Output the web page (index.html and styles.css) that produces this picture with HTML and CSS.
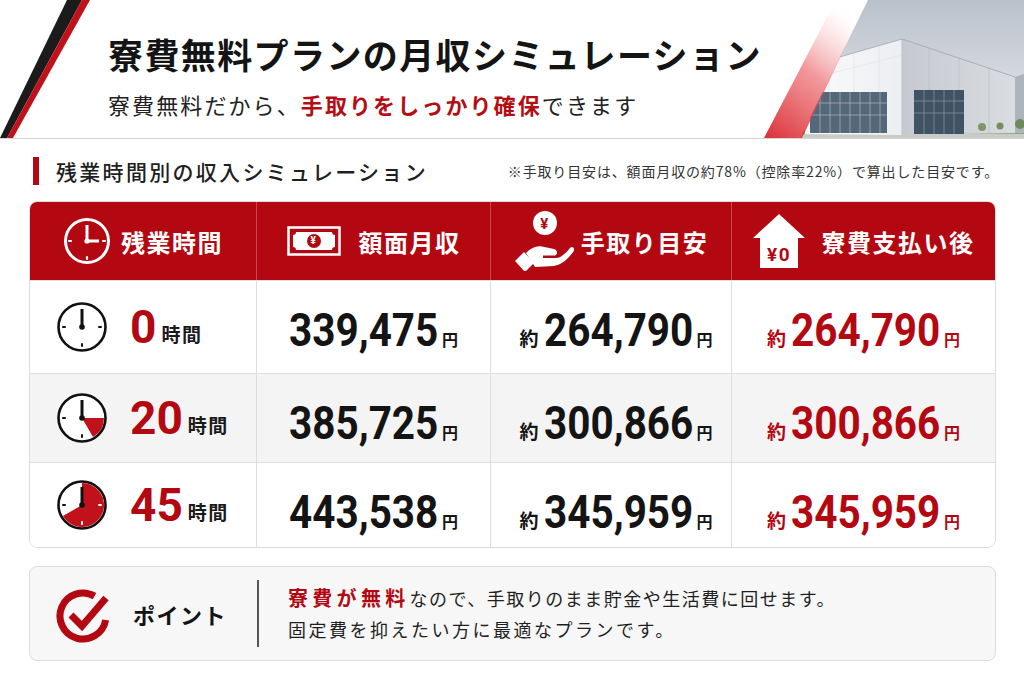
FILE: index.html
```html
<!DOCTYPE html>
<html lang="ja">
<head>
<meta charset="utf-8">
<title>寮費無料プランの月収シミュレーション</title>
<link rel="stylesheet" href="styles.css">
</head>
<body>
<header class="hero">
  <svg class="stripes" width="95" height="138" viewBox="0 0 95 138" aria-hidden="true">
    <polygon points="67,0 82,0 7,138 0,138" fill="#1b1b1b"/>
    <polygon points="82,0 90,0 13,138 7,138" fill="#c1121b"/>
  </svg>
  <div class="hero-text">
    <h1 class="title">寮費無料プランの月収シミュレーション</h1>
    <p class="sub">寮費無料だから、<strong>手取りをしっかり確保</strong>できます</p>
  </div>
  <svg class="photo" width="260" height="138" viewBox="0 0 260 138" aria-hidden="true">
    <defs>
      <linearGradient id="sky" x1="0" y1="0" x2="0" y2="1">
        <stop offset="0" stop-color="#b9c1cb"/>
        <stop offset="0.6" stop-color="#d6dae0"/>
        <stop offset="1" stop-color="#e6e8ec"/>
      </linearGradient>
      <linearGradient id="redband" x1="0" y1="1" x2="0.6" y2="0">
        <stop offset="0" stop-color="#d8242b" stop-opacity="0.95"/>
        <stop offset="0.55" stop-color="#e8555a" stop-opacity="0.6"/>
        <stop offset="1" stop-color="#f4b0b2" stop-opacity="0"/>
      </linearGradient>
      <linearGradient id="leftface" x1="0" y1="0" x2="1" y2="0">
        <stop offset="0" stop-color="#fbfbfc"/>
        <stop offset="1" stop-color="#eceef1"/>
      </linearGradient>
      <linearGradient id="rightface" x1="0" y1="0" x2="1" y2="0">
        <stop offset="0" stop-color="#c6cad0"/>
        <stop offset="1" stop-color="#d9dce0"/>
      </linearGradient>
      <clipPath id="photoclip">
        <polygon points="104,0 260,0 260,138 36,138"/>
      </clipPath>
    </defs>
    <g clip-path="url(#photoclip)">
      <rect x="0" y="0" width="260" height="138" fill="url(#sky)"/>
      <rect x="0" y="128" width="260" height="10" fill="#c9ccc6"/>
      <rect x="0" y="131" width="260" height="3" fill="#8fa37a"/>
      <polygon points="251,77 260,74 260,133 251,133" fill="#aeb4bb"/>
      <polygon points="41,67 138,39 138,135 41,134" fill="url(#leftface)"/>
      <polygon points="138,39 251,77 251,133 138,135" fill="url(#rightface)"/>
      <polyline points="41,67 138,39 251,77" fill="none" stroke="#9ea5ae" stroke-width="0.8"/>
      <line x1="138" y1="39" x2="138" y2="135" stroke="#b3b8bf" stroke-width="0.8"/>
      <g stroke="#dde0e4" stroke-width="0.6">
        <line x1="65" y1="60" x2="65" y2="92"/>
        <line x1="90" y1="53" x2="90" y2="92"/>
        <line x1="115" y1="46" x2="115" y2="92"/>
        <line x1="41" y1="80" x2="138" y2="55"/>
      </g>
      <g stroke="#b8bdc3" stroke-width="0.6">
        <line x1="165" y1="48" x2="165" y2="90"/>
        <line x1="195" y1="58" x2="195" y2="90"/>
        <line x1="225" y1="68" x2="225" y2="133"/>
      </g>
      <rect x="46" y="92" width="77" height="41" fill="#55687a"/>
      <g stroke="#a9b6c2" stroke-width="0.7">
        <line x1="46" y1="103" x2="123" y2="103"/>
        <line x1="46" y1="115" x2="123" y2="115"/>
        <line x1="56" y1="92" x2="56" y2="133"/>
        <line x1="66" y1="92" x2="66" y2="133"/>
        <line x1="76" y1="92" x2="76" y2="133"/>
        <line x1="86" y1="92" x2="86" y2="133"/>
        <line x1="96" y1="92" x2="96" y2="133"/>
        <line x1="106" y1="92" x2="106" y2="133"/>
        <line x1="116" y1="92" x2="116" y2="133"/>
      </g>
      <rect x="150" y="90" width="50" height="44" fill="#3f5364"/>
      <g stroke="#8a9aa8" stroke-width="0.7">
        <line x1="150" y1="101" x2="200" y2="101"/>
        <line x1="150" y1="113" x2="200" y2="113"/>
        <line x1="160" y1="90" x2="160" y2="134"/>
        <line x1="170" y1="90" x2="170" y2="134"/>
        <line x1="180" y1="90" x2="180" y2="134"/>
        <line x1="190" y1="90" x2="190" y2="134"/>
      </g>
      <circle cx="218" cy="127" r="4" fill="#7f9669"/>
      <circle cx="236" cy="126" r="3.5" fill="#758d60"/>
      <circle cx="256" cy="124" r="5" fill="#6f8a5a"/>
    </g>
    <polygon points="0,138 38,138 104,0 72,0" fill="url(#redband)"/>
  </svg>
</header>

<main class="main">
  <div class="sec-head">
    <div class="sec-title"><span class="bar"></span><h2>残業時間別の収入シミュレーション</h2></div>
    <p class="note">※手取り目安は、額面月収の約78%（控除率22%）で算出した目安です。</p>
  </div>

  <div class="table">
    <div class="th">
      <svg class="ic-h1" width="48" height="48" viewBox="0 0 48 48" aria-hidden="true">
        <circle cx="24" cy="24" r="21.5" fill="none" stroke="#fff" stroke-width="3"/>
        <g stroke="#fff" stroke-width="2.2" stroke-linecap="round">
          <line x1="24" y1="40" x2="24" y2="42"/>
          <line x1="6" y1="24" x2="8" y2="24"/>
          <line x1="40" y1="24" x2="42" y2="24"/>
        </g>
        <polyline points="24,8 24,24 36,24" fill="none" stroke="#fff" stroke-width="3"/>
        <circle cx="24" cy="24" r="2.6" fill="#fff"/>
      </svg>
      <span>残業時間</span>
    </div>
    <div class="th">
      <svg class="ic-h2" width="54" height="30" viewBox="0 0 54 30" aria-hidden="true">
        <rect x="1.5" y="1.5" width="51" height="27" fill="none" stroke="#fff" stroke-width="2.5"/>
        <path d="M9,6 H45 A3,3 0 0 0 48,9 V21 A3,3 0 0 0 45,24 H9 A3,3 0 0 0 6,21 V9 A3,3 0 0 0 9,6 Z" fill="#fff"/>
        <circle cx="27" cy="15" r="7" fill="#b30812"/>
        <text x="27" y="18.4" text-anchor="middle" class="svg-yen-s">¥</text>
      </svg>
      <span>額面月収</span>
    </div>
    <div class="th">
      <svg class="ic-h3" width="60" height="60" viewBox="0 0 60 60" aria-hidden="true">
        <circle cx="31" cy="12" r="12" fill="#fff"/>
        <text x="31" y="17.5" text-anchor="middle" class="svg-yen-m">¥</text>
        <path d="M12,42 C17,36.5 23,34.5 28,35.5 L40,38 C44,39 44,44.5 40,44.5 L29,44.5 L29,47 L42,47 C47,47 52,42 56,37 C58.5,34.5 61.5,37.5 59.5,40.5 C54,48 48,53.5 40,55 L21,56 Z" fill="#fff"/>
        <path d="M1,50 L10,41 L20,52 L11,61 Z" fill="#fff"/>
      </svg>
      <span>手取り目安</span>
    </div>
    <div class="th">
      <svg class="ic-h4" width="52" height="54" viewBox="0 0 52 54" aria-hidden="true">
        <polygon points="26,0 52,24 45,24 45,54 7,54 7,24 0,24" fill="#fff"/>
        <text x="26" y="47" text-anchor="middle" class="svg-zero">¥0</text>
      </svg>
      <span>寮費支払い後</span>
    </div>

    <!-- row 1 -->
    <div class="td hours">
      <svg width="52" height="52" viewBox="0 0 52 52" aria-hidden="true">
        <circle cx="26" cy="26" r="23.5" fill="#fff" stroke="#111" stroke-width="2.6"/>
        <g stroke="#111" stroke-width="2" stroke-linecap="round">
          <line x1="26" y1="43" x2="26" y2="45"/>
          <line x1="7" y1="26" x2="9" y2="26"/>
          <line x1="43" y1="26" x2="45" y2="26"/>
        </g>
        <line x1="26" y1="26" x2="26" y2="8" stroke="#111" stroke-width="3"/>
        <circle cx="26" cy="26" r="2.8" fill="#111"/>
      </svg>
      <span class="h-num">0</span><span class="h-unit">時間</span>
    </div>
    <div class="td val sep"><span class="num">339,475</span><span class="yen">円</span></div>
    <div class="td val sep shift"><span class="approx">約</span><span class="num">264,790</span><span class="yen">円</span></div>
    <div class="td val sep red"><span class="approx">約</span><span class="num">264,790</span><span class="yen">円</span></div>

    <!-- row 2 -->
    <div class="td hours alt">
      <svg width="52" height="52" viewBox="0 0 52 52" aria-hidden="true">
        <circle cx="26" cy="26" r="23.5" fill="#fff" stroke="#111" stroke-width="2.6"/>
        <path d="M26,26 L48,26 A22,22 0 0 1 37,45.05 Z" fill="#c1121b"/>
        <g stroke="#111" stroke-width="2" stroke-linecap="round">
          <line x1="26" y1="43" x2="26" y2="45"/>
          <line x1="7" y1="26" x2="9" y2="26"/>
        </g>
        <line x1="26" y1="26" x2="26" y2="8" stroke="#111" stroke-width="3"/>
        <circle cx="26" cy="26" r="2.8" fill="#111"/>
      </svg>
      <span class="h-num">20</span><span class="h-unit">時間</span>
    </div>
    <div class="td val sep alt"><span class="num">385,725</span><span class="yen">円</span></div>
    <div class="td val sep alt shift"><span class="approx">約</span><span class="num">300,866</span><span class="yen">円</span></div>
    <div class="td val sep alt red"><span class="approx">約</span><span class="num">300,866</span><span class="yen">円</span></div>

    <!-- row 3 -->
    <div class="td hours">
      <svg width="52" height="52" viewBox="0 0 52 52" aria-hidden="true">
        <circle cx="26" cy="26" r="23.5" fill="#fff" stroke="#111" stroke-width="2.6"/>
        <path d="M26,26 L26,4 A22,22 0 1 1 6.95,37 Z" fill="#c1121b"/>
        <g stroke="#fff" stroke-width="2" stroke-linecap="round">
          <line x1="26" y1="43" x2="26" y2="45"/>
          <line x1="43" y1="26" x2="45" y2="26"/>
        </g>
        <line x1="7" y1="26" x2="9" y2="26" stroke="#111" stroke-width="2" stroke-linecap="round"/>
        <line x1="26" y1="26" x2="26" y2="8" stroke="#111" stroke-width="3"/>
        <circle cx="26" cy="26" r="2.8" fill="#111"/>
      </svg>
      <span class="h-num">45</span><span class="h-unit">時間</span>
    </div>
    <div class="td val sep"><span class="num">443,538</span><span class="yen">円</span></div>
    <div class="td val sep shift"><span class="approx">約</span><span class="num">345,959</span><span class="yen">円</span></div>
    <div class="td val sep red"><span class="approx">約</span><span class="num">345,959</span><span class="yen">円</span></div>
  </div>

  <div class="point">
    <svg class="check" width="60" height="60" viewBox="0 0 60 60" aria-hidden="true">
      <path d="M39.5,12.1 A23,23 0 1 0 50.65,36" fill="none" stroke="#b30812" stroke-width="7"/>
      <polyline points="16,31 27,42 51,14" fill="none" stroke="#b30812" stroke-width="7" stroke-linejoin="miter"/>
    </svg>
    <span class="point-label">ポイント</span>
    <span class="divider"></span>
    <div class="point-text">
      <p><strong>寮費が無料</strong>なので、手取りのまま貯金や生活費に回せます。</p>
      <p class="wide">固定費を抑えたい方に最適なプランです。</p>
    </div>
  </div>
</main>
</body>
</html>
```

FILE: styles.css
```css
* { box-sizing: border-box; }

html, body {
  margin: 0;
  padding: 0;
  background: #ffffff;
}

body {
  width: 1024px;
  height: 683px;
  overflow: hidden;
  font-family: "Noto Sans CJK JP", "Noto Sans", sans-serif;
  color: #1a1a1a;
}

/* ---------- hero ---------- */
.hero {
  display: flex;
  height: 139px;
  border-bottom: 1px solid #d6d6d6;
  background: #fff;
}

.stripes { flex: none; display: block; }

.hero-text {
  margin-left: 13px;
  padding-top: 33px;
}

.title {
  margin: 0;
  font-size: 35px;
  line-height: 42px;
  font-weight: 700;
  letter-spacing: 1.4px;
  color: #141414;
  white-space: nowrap;
}

.sub {
  margin: 14px 0 0;
  font-size: 22px;
  line-height: 30px;
  font-weight: 400;
  letter-spacing: 2.1px;
  color: #222;
  white-space: nowrap;
}

.sub strong {
  color: #b50d14;
  font-weight: 700;
}

.photo {
  flex: none;
  display: block;
  margin-left: auto;
}

/* ---------- main ---------- */
.main {
  padding: 0 28px 0 29px;
}

.sec-head {
  display: flex;
  align-items: center;
  justify-content: space-between;
  height: 28px;
  margin: 18px 0 16px;
}

.sec-title {
  display: flex;
  align-items: center;
}

.bar {
  width: 6px;
  height: 28px;
  margin-left: 4px;
  background: #b30812;
}

.sec-title h2 {
  margin: 0 0 0 17px;
  font-size: 21px;
  line-height: 28px;
  font-weight: 500;
  letter-spacing: 2.3px;
  color: #1f1f1f;
}

.note {
  margin: 0 -3px 0 0;
  font-size: 14px;
  line-height: 20px;
  letter-spacing: 0.85px;
  color: #333;
}

/* ---------- table ---------- */
.table {
  display: grid;
  grid-template-columns: 226px 234px 241px 1fr;
  grid-template-rows: 78px 93px 89px 85px;
  border: 1px solid #dcdcdc;
  border-radius: 8px;
  overflow: hidden;
  background: #fff;
}

.th {
  display: flex;
  align-items: center;
  justify-content: center;
  background: #b30812;
  color: #fff;
  font-size: 24px;
  font-weight: 700;
  letter-spacing: 1.5px;
  white-space: nowrap;
}

.th + .th { border-left: 1px solid rgba(255, 255, 255, 0.25); }

.th svg { flex: none; display: block; }
.ic-h1 { margin-right: 10px; }
.ic-h2 { margin-right: 18px; }
.ic-h3 { margin-right: 7px; }
.ic-h4 { margin-right: 17px; }

.td {
  display: flex;
  align-items: center;
  border-top: 1px solid #dedede;
  background: #fff;
}

.td.alt { background: #f4f4f4; }
.td.sep { border-left: 1px solid #dedede; }

.hours {
  padding-left: 26px;
}

.hours svg {
  flex: none;
  display: block;
  margin-right: 22px;
}

.h-num {
  font-family: Roboto, "Liberation Sans", sans-serif;
  font-size: 46px;
  font-weight: 700;
  line-height: 1;
  color: #b30812;
}

.h-unit {
  margin-left: 5px;
  margin-top: 12px;
  font-size: 19px;
  font-weight: 700;
  letter-spacing: 1.5px;
  color: #1a1a1a;
}

.val {
  justify-content: center;
  align-items: baseline;
  padding-top: 26px;
  color: #141414;
}

.val.shift {
  padding-left: 10px;
}

.num {
  display: inline-block;
  font-family: Roboto, "Liberation Sans", sans-serif;
  font-size: 46px;
  font-weight: 700;
  line-height: 1;
  transform: scaleX(0.88);
  transform-origin: left center;
  margin-right: -0.43em;
}

.approx {
  font-size: 19px;
  font-weight: 700;
  margin-right: 5px;
}

.yen {
  font-size: 16px;
  font-weight: 700;
  margin-left: 3px;
}

.val.red { color: #b30812; }

.svg-yen-s {
  font-family: Roboto, "Liberation Sans", sans-serif;
  font-size: 10px;
  font-weight: 700;
  fill: #fff;
}

.svg-yen-m {
  font-family: Roboto, "Liberation Sans", sans-serif;
  font-size: 15px;
  font-weight: 700;
  fill: #b30812;
}

.svg-zero {
  font-family: Roboto, "Liberation Sans", sans-serif;
  font-size: 19px;
  font-weight: 700;
  fill: #b30812;
}

/* ---------- point ---------- */
.point {
  display: flex;
  align-items: center;
  height: 95px;
  margin-top: 18px;
  padding-left: 25px;
  border: 1px solid #dcdcdc;
  border-radius: 8px;
  background: #f7f7f7;
}

.check { flex: none; display: block; }

.point-label {
  margin-left: 18px;
  font-size: 22px;
  font-weight: 700;
  letter-spacing: 1.5px;
  color: #141414;
}

.divider {
  width: 2px;
  height: 67px;
  margin-left: 30px;
  background: #555;
}

.point-text {
  margin-left: 29px;
}

.point-text p {
  margin: 0;
  font-size: 18px;
  line-height: 31px;
  letter-spacing: 1.5px;
  color: #1f1f1f;
  white-space: nowrap;
}

.point-text p.wide {
  letter-spacing: 2.5px;
}

.point-text strong {
  font-size: 20px;
  font-weight: 700;
  letter-spacing: 4.3px;
  color: #b30812;
}
```
